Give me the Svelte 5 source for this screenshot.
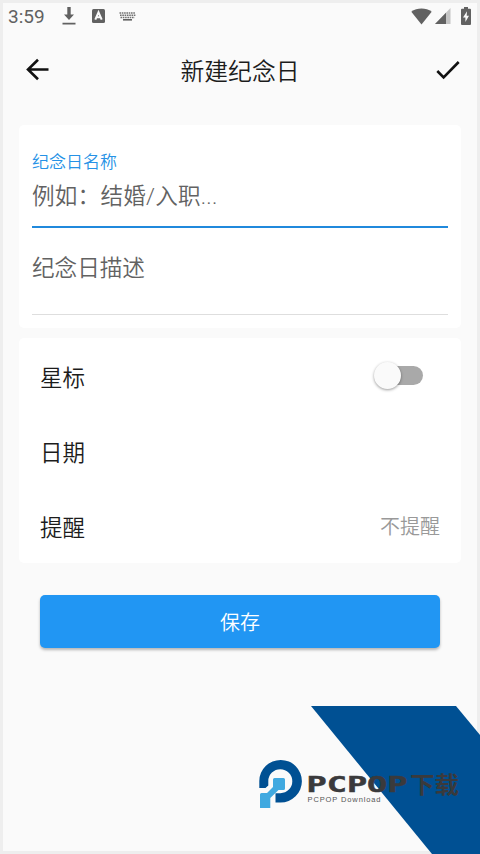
<script>
	let name = "";
	let description = "";
	let starred = false;
	let reminder = "不提醒";
</script>

<div class="screen">
	<div class="status-bar">
		<span class="time">3:59</span>
		<svg class="download" width="14" height="18" viewBox="0 0 14 18">
			<path d="M5.3 0h3.4v7.5H12L7 13 2 7.5h3.3zM.5 15.8h13v1.8H.5z" />
		</svg>
		<svg class="letter" width="13" height="14" viewBox="0 0 13 14">
			<rect width="13" height="14" rx="1.5" />
			<path class="cut" d="M3.3 10.7 6.5 3.3l3.2 7.4M4.5 8.3h4" />
		</svg>
		<svg class="keyboard" width="17" height="9" viewBox="0 0 17 9">
			<path class="keys" d="M.5 1h16M1 3.3h15.5M1.5 5.5h14" />
			<path d="M4 7h9v1.6H4z" />
		</svg>
		<span class="space"></span>
		<svg class="wifi" width="21" height="17" viewBox="0 0 21 17">
			<path d="M.3 3.7C6-.7 15-.7 20.7 3.7L10.5 16.5z" />
		</svg>
		<svg class="signal" width="16" height="16" viewBox="0 0 16 16">
			<path class="faint" d="M0 16 15.5 0v16z" />
			<path d="M0 16 11 4.7V16z" />
		</svg>
		<svg class="battery" width="10" height="18" viewBox="0 0 10 18">
			<path d="M3 0h4v1.8h2q1 0 1 1V17q0 1-1 1H1q-1 0-1-1V2.8q0-1 1-1h2z" />
			<path class="bolt" d="M6 4.3 2 10.6h2.4V15L8 8.8H5.7z" />
		</svg>
	</div>

	<header>
		<button class="icon" aria-label="返回">
			<svg width="24" height="24" viewBox="0 0 24 24">
				<path d="M23.5 12.5H3M13 2.7 3 12.5l10 9.8" />
			</svg>
		</button>
		<h1>新建纪念日</h1>
		<button class="icon" aria-label="完成">
			<svg width="24" height="24" viewBox="0 0 24 24">
				<path d="m1.3 14 6.3 6.3L22.7 5" />
			</svg>
		</button>
	</header>

	<section class="card form">
		<label class="field active">
			<span class="label">纪念日名称</span>
			<input bind:value={name} placeholder="例如：结婚/入职..." />
		</label>
		<label class="field">
			<input bind:value={description} placeholder="纪念日描述" />
		</label>
	</section>

	<section class="card options">
		<div class="row">
			<span>星标</span>
			<button
				class="switch"
				class:on={starred}
				aria-label="星标"
				on:click={() => (starred = !starred)}
			></button>
		</div>
		<div class="row">
			<span>日期</span>
		</div>
		<div class="row">
			<span>提醒</span>
			<span class="value">{reminder}</span>
		</div>
	</section>

	<button class="save">保存</button>

	<!-- corner logo, lies over the page -->
	<svg class="brand" width="240" height="154" viewBox="240 700 240 154">
		<path fill="#005093" d="M311 706H456L480 735V854H432z" />
		<path
			fill="#005093"
			d="M259.3 788V781A21.3 21.3 0 1 1 280.5 802.5H275.5V793.2H280.5A12 12 0 1 0 268.300 781V785.500L265.500 788z"
		/>
		<path
			fill="#40a9e0"
			d="M274.5 778H283.5Q285 778 285 779.5V788.5Q285 790 283.5 790H278.500L270.300 798V808H260V794.500Q260 793 261.500 793H267L273 787V779.500Q273 778 274.500 778z"
		/>
		<text class="latin" x="306.5" y="791.5" textLength="101" lengthAdjust="spacingAndGlyphs">PCPOP</text>
		<text class="cjk" x="410" y="793" textLength="49" lengthAdjust="spacingAndGlyphs">下载</text>
		<text class="sub" x="307.5" y="802" textLength="73">PCPOP Download</text>
	</svg>
</div>

<style>
	:global(body) {
		margin: 0;
		background: #fafafa;
	}

	.screen {
		position: relative;
		box-sizing: border-box;
		width: 480px;
		height: 854px;
		overflow: hidden;
		padding: 3px;
		box-shadow: inset 0 0 0 3px #eee;
		background: #fafafa;
		font-family: Roboto, "Noto Sans CJK SC", sans-serif;
		color: #1c1c1c;
	}

	button,
	input {
		padding: 0;
		border: none;
		outline: none;
		background: none;
		font-family: inherit;
	}

	svg {
		display: block;
	}

	/* Status bar */
	.status-bar {
		display: flex;
		align-items: center;
		height: 26px;
		padding: 0 6px 0 5px;
		fill: #616161;
		color: #616161;
	}

	.time {
		width: 40px;
		font-size: 19px;
		line-height: 26px;
		padding-top: 2px;
	}

	.download {
		margin-left: 14px;
	}

	.letter {
		margin-left: 16px;
	}

	.cut {
		fill: none;
		stroke: #fafafa;
		stroke-width: 2;
	}

	.keyboard {
		margin-left: 14px;
	}

	.keys {
		fill: none;
		stroke: #707070;
		stroke-width: 1.5;
		stroke-dasharray: 1.6 0.7;
	}

	.space {
		flex: 1;
	}

	.signal {
		margin-left: 3px;
	}

	.faint {
		fill: #c4c4c4;
	}

	.battery {
		margin-left: 10px;
	}

	.bolt {
		fill: #fafafa;
	}

	/* App bar */
	header {
		display: flex;
		align-items: center;
		justify-content: space-between;
		height: 80px;
		padding: 0 17px 0 22px;
	}

	h1 {
		margin: 6px 5px 0 0;
		font-size: 23.8px;
		font-weight: 350;
		line-height: 36px;
		flex: 1;
		text-align: center;
	}

	.icon svg {
		fill: none;
		stroke: #111;
		stroke-width: 2.6;
	}

	/* Cards */
	.card {
		box-sizing: border-box;
		margin: 0 16px;
		border-radius: 5px;
		background: #fff;
	}

	.form {
		height: 203px;
		margin-top: 16px;
		padding: 25px 13px 0;
	}

	.field {
		display: flex;
		flex-direction: column;
		box-sizing: border-box;
		height: 87px;
		border-bottom: 1px solid #dedede;
	}

	.field.active {
		height: 78px;
		border-bottom: 2px solid #2089dc;
	}

	.label {
		height: 24px;
		font-size: 17px;
		line-height: 24px;
		font-weight: 350;
		color: #2692e6;
	}

	input {
		height: 40px;
		margin-top: 20px;
		font-size: 22.6px;
		font-weight: 350;
		color: #1c1c1c;
	}

	.active input {
		margin-top: 2px;
		letter-spacing: 0.2px;
	}

	input::placeholder {
		color: #626262;
		opacity: 1;
	}

	.options {
		height: 225px;
		margin-top: 10px;
		padding: 0 21px;
	}

	.row {
		display: flex;
		align-items: center;
		justify-content: space-between;
		height: 75px;
		font-size: 22.5px;
		font-weight: 350;
	}

	.value {
		font-size: 20px;
		font-weight: 350;
		color: #999;
	}

	.switch {
		display: flex;
		align-items: center;
		width: 44px;
		height: 19px;
		margin-right: 17px;
		border-radius: 10px;
		background: #a9a9a9;
	}

	.switch::before {
		content: "";
		width: 27px;
		height: 27px;
		margin-left: -5px;
		border-radius: 50%;
		background: #fafafa;
		box-shadow: 0 1px 3px rgba(0, 0, 0, 0.4);
	}

	.switch.on::before {
		margin-left: 22px;
	}

	.save {
		display: block;
		width: 400px;
		height: 53px;
		margin: 32px 37px 0;
		border-radius: 5px;
		background: #2196f3;
		box-shadow: 0 2px 3px rgba(0, 0, 0, 0.28);
		font-size: 20px;
		font-weight: 350;
		color: #fff;
	}

	/* Brand */
	.brand {
		position: absolute;
		right: 0;
		bottom: 0;
	}

	.latin {
		font: 700 21.5px "DejaVu Sans Mono", monospace;
		fill: #3a3a3c;
		stroke: #3a3a3c;
		stroke-width: 0.5;
	}

	.cjk {
		font: 700 23px "Noto Sans CJK SC", sans-serif;
		fill: #3a3a3c;
	}

	.sub {
		font: 400 7.5px "Liberation Sans", sans-serif;
		fill: #555;
	}
</style>
